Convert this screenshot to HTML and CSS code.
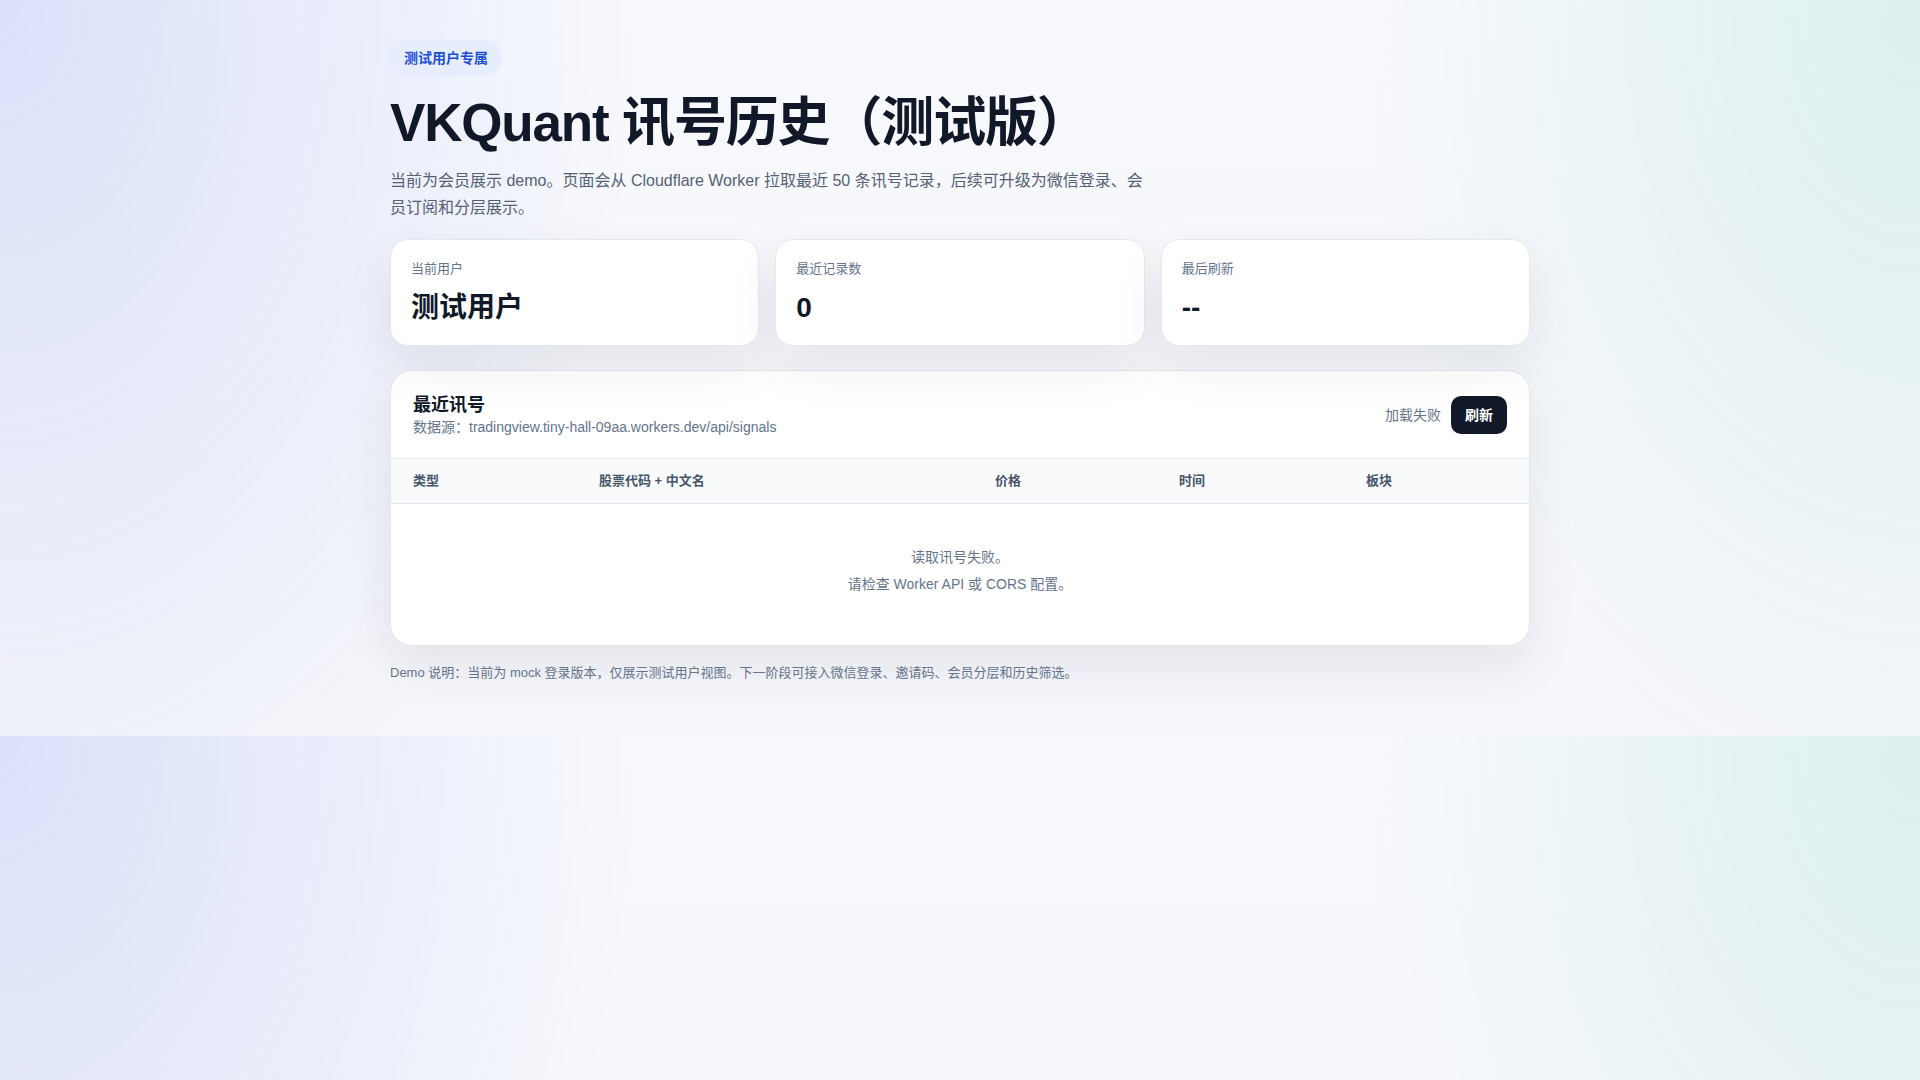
FILE: index.html
```html
<!DOCTYPE html>
<html lang="zh-CN">
<head>
<meta charset="utf-8">
<title>VKQuant 讯号历史（测试版）</title>
<link rel="stylesheet" href="styles.css">
</head>
<body>
<div class="page">
  <span class="badge">测试用户专属</span>
  <h1 class="title">VKQuant 讯号历史（测试版）</h1>
  <p class="lead">当前为会员展示 demo。页面会从 Cloudflare Worker 拉取最近 50 条讯号记录，后续可升级为微信登录、会员订阅和分层展示。</p>

  <section class="stats">
    <div class="card">
      <div class="card-label">当前用户</div>
      <div class="card-value">测试用户</div>
    </div>
    <div class="card">
      <div class="card-label">最近记录数</div>
      <div class="card-value">0</div>
    </div>
    <div class="card">
      <div class="card-label">最后刷新</div>
      <div class="card-value">--</div>
    </div>
  </section>

  <section class="panel">
    <div class="panel-head">
      <div class="panel-titles">
        <h2 class="panel-title">最近讯号</h2>
        <div class="panel-source">数据源：tradingview.tiny-hall-09aa.workers.dev/api/signals</div>
      </div>
      <div class="panel-actions">
        <span class="status">加载失败</span>
        <button class="btn" type="button">刷新</button>
      </div>
    </div>
    <table class="signals">
      <thead>
        <tr>
          <th class="col-type">类型</th>
          <th class="col-code">股票代码 + 中文名</th>
          <th class="col-price">价格</th>
          <th class="col-time">时间</th>
          <th class="col-sector">板块</th>
        </tr>
      </thead>
      <tbody>
        <tr>
          <td class="empty" colspan="5">读取讯号失败。<br>请检查 Worker API 或 CORS 配置。</td>
        </tr>
      </tbody>
    </table>
  </section>

  <p class="note">Demo 说明：当前为 mock 登录版本，仅展示测试用户视图。下一阶段可接入微信登录、邀请码、会员分层和历史筛选。</p>
</div>
</body>
</html>
```

FILE: styles.css
```css
* {
  box-sizing: border-box;
}

body {
  margin: 0;
  font-family: "Liberation Sans", "Noto Sans CJK SC", sans-serif;
  line-height: 1.5;
  color: #0f172a;
  background:
    radial-gradient(640px 920px at 0 0, rgba(90, 120, 235, 0.19), rgba(90, 120, 235, 0) 100%),
    radial-gradient(560px 820px at 100% 0, rgba(20, 170, 140, 0.12), rgba(20, 170, 140, 0) 100%),
    linear-gradient(180deg, #f8f9fd 0%, #f5f6fa 100%);
}

.page {
  max-width: 1140px;
  margin: 0 auto;
  padding: 40px 0 53px;
}

.badge {
  display: inline-block;
  padding: 8px 14px;
  font-size: 14px;
  line-height: 20px;
  font-weight: 700;
  color: #1d4ed8;
  background: #e6edfd;
  border-radius: 999px;
}

.title {
  margin: 17px 0 13px;
  font-size: 53px;
  line-height: 1.15;
  font-weight: 700;
  letter-spacing: -0.022em;
  color: #111827;
}

.lead {
  max-width: 760px;
  margin: 0 0 18px;
  font-size: 16px;
  line-height: 27px;
  color: #556274;
}

.stats {
  display: grid;
  grid-template-columns: repeat(3, 1fr);
  gap: 16px;
}

.card {
  padding: 19px 20px 19px;
  background: #ffffff;
  border: 1px solid #e2e8f0;
  border-radius: 18px;
  box-shadow: 0 20px 50px rgba(15, 23, 42, 0.08);
}

.card-label {
  font-size: 13px;
  line-height: 20px;
  color: #64748b;
  margin-bottom: 11px;
}

.card-value {
  font-size: 28px;
  line-height: 36px;
  font-weight: 700;
  color: #111827;
}

.panel {
  margin-top: 24px;
  background: #ffffff;
  border: 1px solid #e2e8f0;
  border-radius: 22px;
  box-shadow: 0 20px 50px rgba(15, 23, 42, 0.08);
  overflow: hidden;
}

.panel-head {
  display: flex;
  align-items: center;
  justify-content: space-between;
  padding: 22px 22px 20px;
}

.panel-title {
  margin: 0;
  font-size: 18px;
  line-height: 24px;
  font-weight: 700;
  color: #111827;
}

.panel-source {
  font-size: 14px;
  line-height: 21px;
  color: #64748b;
}

.panel-actions {
  display: flex;
  align-items: center;
  gap: 10px;
}

.status {
  font-size: 14px;
  line-height: 20px;
  color: #64748b;
}

.btn {
  padding: 9px 14px;
  font-family: inherit;
  font-size: 14px;
  line-height: 20px;
  font-weight: 700;
  color: #ffffff;
  background: #111827;
  border: 0;
  border-radius: 10px;
}

.signals {
  width: 100%;
  border-collapse: collapse;
  table-layout: fixed;
}

.signals th {
  padding: 13px 22px;
  font-size: 13px;
  line-height: 18px;
  font-weight: 700;
  color: #475569;
  text-align: left;
  background: #f8fafc;
  border-top: 1px solid #e2e8f0;
  border-bottom: 1px solid #e2e8f0;
}

.col-type { width: 186px; }
.col-code { width: 396px; }
.col-price { width: 184px; }
.col-time { width: 187px; }

.signals .empty {
  padding: 40px 22px 47px;
  font-size: 14px;
  line-height: 27px;
  color: #64748b;
  text-align: center;
}

.note {
  margin: 16px 0 0;
  font-size: 13px;
  line-height: 21px;
  color: #64748b;
}
```
